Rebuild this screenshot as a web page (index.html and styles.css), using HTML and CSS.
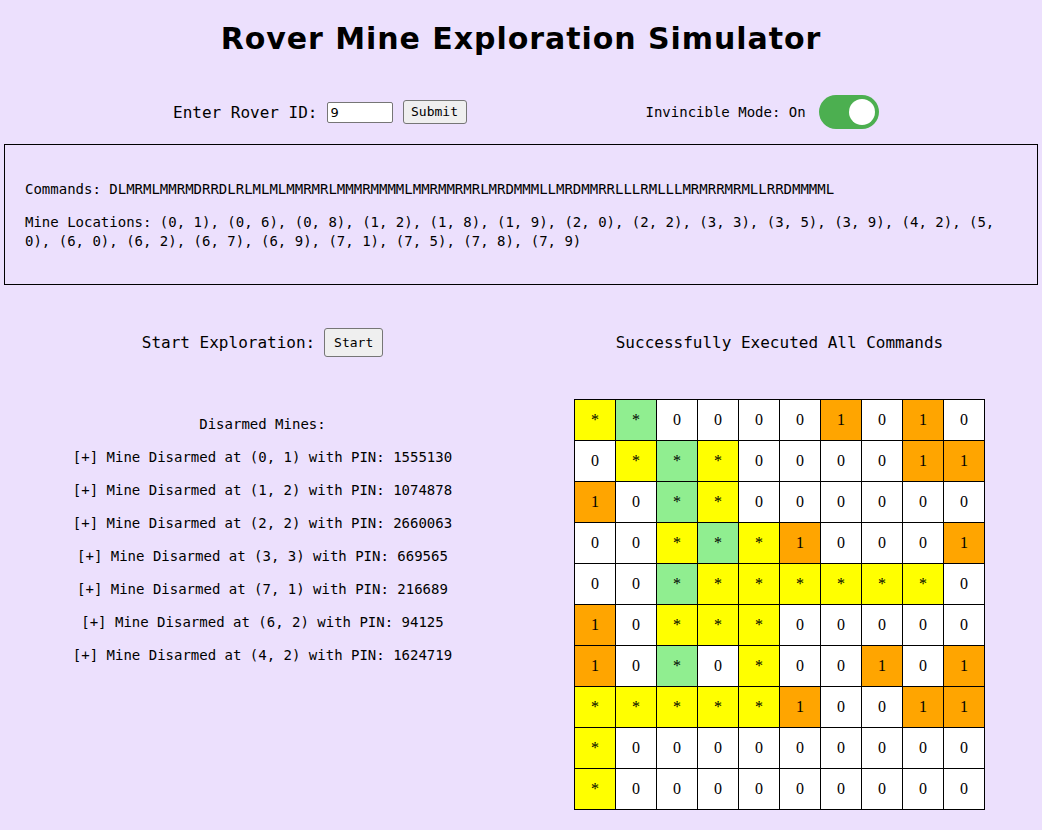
FILE: index.html
```html
<!DOCTYPE html>
<html lang="en">
<head>
<meta charset="utf-8">
<title>Rover Mine Exploration Simulator</title>
<link rel="stylesheet" href="styles.css">
</head>
<body>
<h1 class="title">Rover Mine Exploration Simulator</h1>
<div class="controls">
  <div class="rover-form">
    <label class="label-lg" for="rid">Enter Rover ID:</label>
    <input id="rid" class="rid-input" type="text" value="9">
    <button class="btn btn-submit">Submit</button>
  </div>
  <div class="mode">
    <span class="mode-text">Invincible Mode: On</span>
    <span class="toggle"><span class="knob"></span></span>
  </div>
</div>
<div class="info-box">
  <p>Commands: DLMRMLMMRMDRRDLRLMLMLMMRMRLMMMRMMMMLMMRMMRMRLMRDMMMLLMRDMMRRLLLRMLLLMRMRRMRMLLRRDMMMML</p>
  <p>Mine Locations: (0, 1), (0, 6), (0, 8), (1, 2), (1, 8), (1, 9), (2, 0), (2, 2), (3, 3), (3, 5), (3, 9), (4, 2), (5, 0), (6, 0), (6, 2), (6, 7), (6, 9), (7, 1), (7, 5), (7, 8), (7, 9)</p>
</div>
<div class="main">
  <div class="col col-left">
    <div class="start-row">
      <span class="label-lg">Start Exploration:</span>
      <button class="btn btn-start">Start</button>
    </div>
    <div class="mines">
      <p>Disarmed Mines:</p>
      <p>[+] Mine Disarmed at (0, 1) with PIN: 1555130</p>
      <p>[+] Mine Disarmed at (1, 2) with PIN: 1074878</p>
      <p>[+] Mine Disarmed at (2, 2) with PIN: 2660063</p>
      <p>[+] Mine Disarmed at (3, 3) with PIN: 669565</p>
      <p>[+] Mine Disarmed at (7, 1) with PIN: 216689</p>
      <p>[+] Mine Disarmed at (6, 2) with PIN: 94125</p>
      <p>[+] Mine Disarmed at (4, 2) with PIN: 1624719</p>
    </div>
  </div>
  <div class="col col-right">
    <p class="status">Successfully Executed All Commands</p>
    <table class="grid">
      <tr><td class="y">*</td><td class="g">*</td><td>0</td><td>0</td><td>0</td><td>0</td><td class="o">1</td><td>0</td><td class="o">1</td><td>0</td></tr>
      <tr><td>0</td><td class="y">*</td><td class="g">*</td><td class="y">*</td><td>0</td><td>0</td><td>0</td><td>0</td><td class="o">1</td><td class="o">1</td></tr>
      <tr><td class="o">1</td><td>0</td><td class="g">*</td><td class="y">*</td><td>0</td><td>0</td><td>0</td><td>0</td><td>0</td><td>0</td></tr>
      <tr><td>0</td><td>0</td><td class="y">*</td><td class="g">*</td><td class="y">*</td><td class="o">1</td><td>0</td><td>0</td><td>0</td><td class="o">1</td></tr>
      <tr><td>0</td><td>0</td><td class="g">*</td><td class="y">*</td><td class="y">*</td><td class="y">*</td><td class="y">*</td><td class="y">*</td><td class="y">*</td><td>0</td></tr>
      <tr><td class="o">1</td><td>0</td><td class="y">*</td><td class="y">*</td><td class="y">*</td><td>0</td><td>0</td><td>0</td><td>0</td><td>0</td></tr>
      <tr><td class="o">1</td><td>0</td><td class="g">*</td><td>0</td><td class="y">*</td><td>0</td><td>0</td><td class="o">1</td><td>0</td><td class="o">1</td></tr>
      <tr><td class="y">*</td><td class="y">*</td><td class="y">*</td><td class="y">*</td><td class="y">*</td><td class="o">1</td><td>0</td><td>0</td><td class="o">1</td><td class="o">1</td></tr>
      <tr><td class="y">*</td><td>0</td><td>0</td><td>0</td><td>0</td><td>0</td><td>0</td><td>0</td><td>0</td><td>0</td></tr>
      <tr><td class="y">*</td><td>0</td><td>0</td><td>0</td><td>0</td><td>0</td><td>0</td><td>0</td><td>0</td><td>0</td></tr>
    </table>
  </div>
</div>
</body>
</html>
```
FILE: styles.css
```css
html, body {
  margin: 0;
  padding: 0;
}
body {
  background: #ece0fd;
  color: #000;
  font-family: "DejaVu Sans Mono", "Liberation Mono", monospace;
  font-size: 14px;
  line-height: 19px;
}
.title {
  margin: 21px 0 0;
  text-align: center;
  font-family: "DejaVu Sans", sans-serif;
  font-weight: bold;
  font-size: 30px;
  line-height: 36px;
  letter-spacing: 0.95px;
}
.controls {
  display: flex;
  align-items: center;
  margin-top: 38px;
  padding-left: 173px;
  height: 34px;
}
.rover-form {
  display: flex;
  align-items: center;
}
.label-lg {
  font-size: 16px;
}
.rid-input {
  box-sizing: border-box;
  width: 66px;
  height: 21px;
  margin: 0 0 0 9px;
  padding: 1px 3px;
  border: 1px solid #767676;
  border-radius: 2px;
  background: #fff;
  font-family: "DejaVu Sans", sans-serif;
  font-size: 13px;
}
.btn {
  box-sizing: border-box;
  background: #efefef;
  border: 1px solid #767676;
  border-radius: 3px;
  font-family: "DejaVu Sans Mono", monospace;
  font-size: 13px;
  line-height: 14px;
  color: #000;
}
.btn-submit {
  margin-left: 10px;
  width: 64px;
  height: 24px;
  padding: 0;
}
.btn-start {
  margin-left: 9px;
  width: 59px;
  height: 29px;
  padding: 0;
}
.mode {
  display: flex;
  align-items: center;
  margin-left: 179px;
}
.mode-text {
  font-size: 14px;
}
.toggle {
  display: flex;
  justify-content: flex-end;
  align-items: center;
  box-sizing: border-box;
  width: 60px;
  height: 34px;
  padding: 4px;
  margin-left: 13px;
  border-radius: 17px;
  background: #4caf50;
}
.knob {
  width: 26px;
  height: 26px;
  border-radius: 50%;
  background: #fff;
}
.info-box {
  margin: 15px 4px 0;
  border: 1px solid #000;
  padding: 21px 24px 19px 20px;
}
.info-box p {
  margin: 14px 0;
}
.main {
  display: grid;
  grid-template-columns: 1fr 1fr;
  margin: 42px 4px 0;
}
.col {
  display: flex;
  flex-direction: column;
  align-items: center;
}
.start-row {
  display: flex;
  align-items: center;
  height: 29px;
  padding-top: 1px;
}
.mines {
  margin-top: 44px;
  text-align: center;
}
.mines p {
  margin: 14px 0;
}
.status {
  margin: 6px 0 0;
  font-size: 16px;
  line-height: 19px;
}
.grid {
  margin-top: 47px;
  border-collapse: collapse;
  font-family: "Liberation Serif", "Times New Roman", serif;
  font-size: 16px;
  line-height: 18px;
}
.grid td {
  width: 40px;
  height: 40px;
  padding: 0;
  border: 1px solid #000;
  background: #fff;
  text-align: center;
  vertical-align: middle;
}
.grid td.y { background: #ffff00; }
.grid td.g { background: #90ee90; }
.grid td.o { background: #ffa500; }
```
